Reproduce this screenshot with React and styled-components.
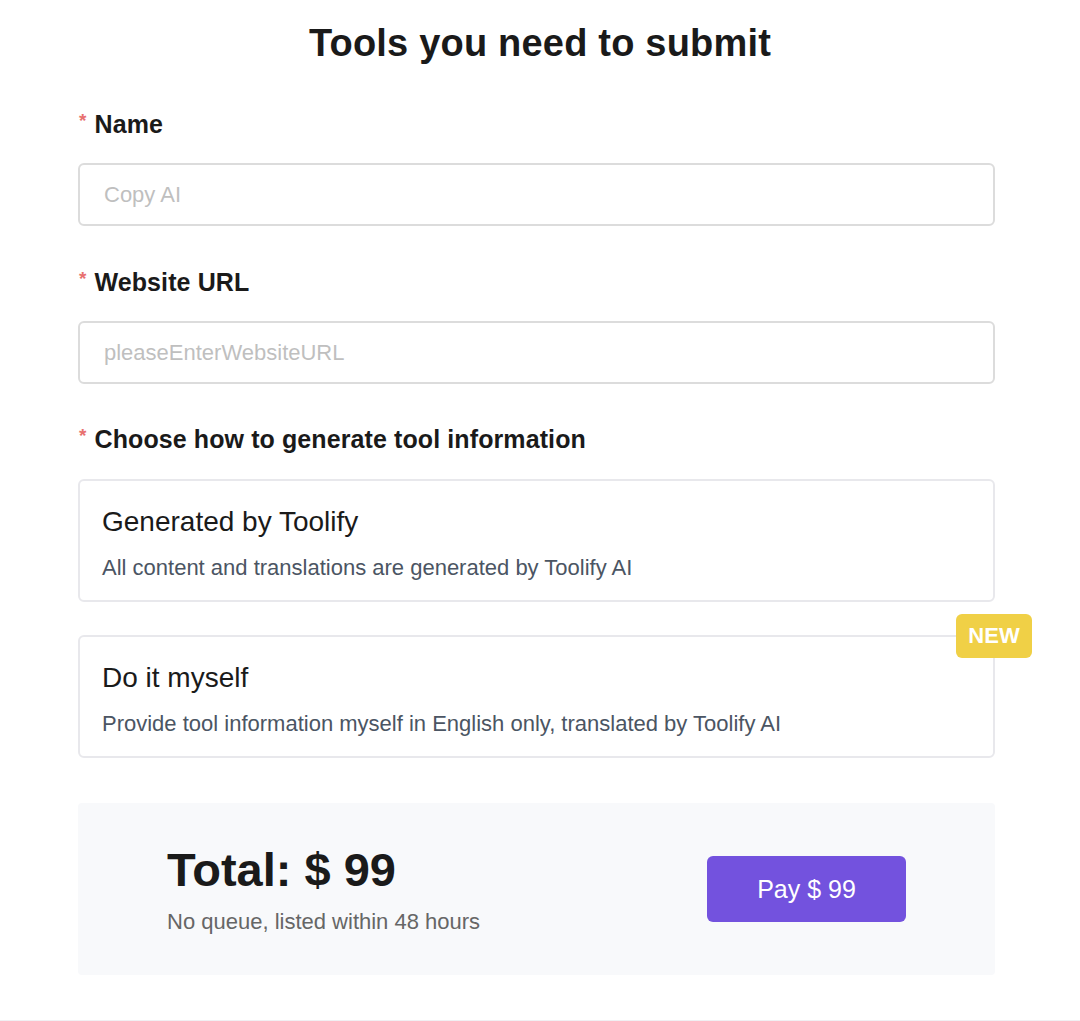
import React from "react";
import styled, {createGlobalStyle} from "styled-components";

const GlobalStyle = createGlobalStyle`
  body {
    margin: 0;
    background: #ffffff;
    font-family: "Liberation Sans", Arial, sans-serif;
    color: #1a1a1a;
  }
`;

const Page = styled.div`
  box-sizing: border-box;
  min-height: 1021px;
  border-bottom: 1px solid #f0f0f3;
  padding-top: 21px;
`;

const Title = styled.h1`
  margin: 0;
  font-size: 38px;
  line-height: 44px;
  font-weight: 700;
  text-align: center;
  color: #1a1a1a;
  letter-spacing: 0.2px;
`;

const Form = styled.div`
  width: 917px;
  margin-left: 78px;
  display: flex;
  flex-direction: column;
`;

const Field = styled.div`
  display: flex;
  flex-direction: column;
  gap: ${(props) => props.gap || "24px"};
  margin-top: ${(props) => props.top || "41px"};
`;

const Label = styled.div`
  display: flex;
  align-items: center;
  font-size: 25px;
  line-height: 30px;
  font-weight: 700;
  color: #1a1a1a;
  letter-spacing: 0.1px;
`;

const Star = styled.span`
  color: #e8716f;
  font-size: 19px;
  font-weight: 700;
  margin-right: 8px;
  margin-left: 1px;
  position: relative;
  top: -3px;
`;

const Input = styled.input`
  box-sizing: border-box;
  width: 100%;
  height: 63px;
  border: 2px solid #dcdcdc;
  border-radius: 6px;
  padding: 0 24px;
  font-family: "Liberation Sans", Arial, sans-serif;
  font-size: 22px;
  color: #1a1a1a;
  outline: none;

  &::placeholder {
    color: #bfbfbf;
  }
`;

const Options = styled.div`
  display: flex;
  flex-direction: column;
  gap: 33px;
`;

const OptionCard = styled.div`
  position: relative;
  box-sizing: border-box;
  height: 123px;
  border: 2px solid #e8e8ec;
  border-radius: 6px;
  padding: 25px 22px 0;
`;

const OptionTitle = styled.div`
  font-size: 28px;
  line-height: 32px;
  color: #1a1a1a;
`;

const OptionText = styled.div`
  margin-top: 17px;
  font-size: 22px;
  line-height: 26px;
  color: #4b5563;
`;

const Badge = styled.div`
  position: absolute;
  top: -23px;
  right: -39px;
  width: 76px;
  height: 44px;
  border-radius: 6px;
  background: #f0d046;
  color: #ffffff;
  font-size: 22px;
  font-weight: 700;
  display: flex;
  align-items: center;
  justify-content: center;
`;

const TotalBox = styled.div`
  margin-top: 45px;
  height: 172px;
  background: #f8f9fb;
  border-radius: 4px;
  display: flex;
  align-items: center;
  justify-content: space-between;
  padding: 0 89px;
`;

const TotalText = styled.div`
  font-size: 47px;
  line-height: 54px;
  font-weight: 700;
  color: #1a1a1a;
`;

const TotalNote = styled.div`
  margin-top: 12px;
  font-size: 22px;
  line-height: 26px;
  color: #666666;
`;

const PayButton = styled.button`
  width: 199px;
  height: 66px;
  border: none;
  border-radius: 6px;
  background: #7352de;
  color: #ffffff;
  font-family: "Liberation Sans", Arial, sans-serif;
  font-size: 25px;
  cursor: pointer;
`;

export default function App() {
    return (
        <Page>
            <GlobalStyle/>
            <Title>Tools you need to submit</Title>
            <Form>
                <Field top="44px">
                    <Label><Star>*</Star>Name</Label>
                    <Input placeholder="Copy AI"/>
                </Field>
                <Field>
                    <Label><Star>*</Star>Website URL</Label>
                    <Input placeholder="pleaseEnterWebsiteURL"/>
                </Field>
                <Field top="40px" gap="25px">
                    <Label><Star>*</Star>Choose how to generate tool information</Label>
                    <Options>
                        <OptionCard>
                            <OptionTitle>Generated by Toolify</OptionTitle>
                            <OptionText>All content and translations are generated by Toolify AI</OptionText>
                        </OptionCard>
                        <OptionCard>
                            <Badge>NEW</Badge>
                            <OptionTitle>Do it myself</OptionTitle>
                            <OptionText>Provide tool information myself in English only, translated by Toolify AI</OptionText>
                        </OptionCard>
                    </Options>
                </Field>
                <TotalBox>
                    <div>
                        <TotalText>Total: $ 99</TotalText>
                        <TotalNote>No queue, listed within 48 hours</TotalNote>
                    </div>
                    <PayButton>Pay $ 99</PayButton>
                </TotalBox>
            </Form>
        </Page>
    );
}
